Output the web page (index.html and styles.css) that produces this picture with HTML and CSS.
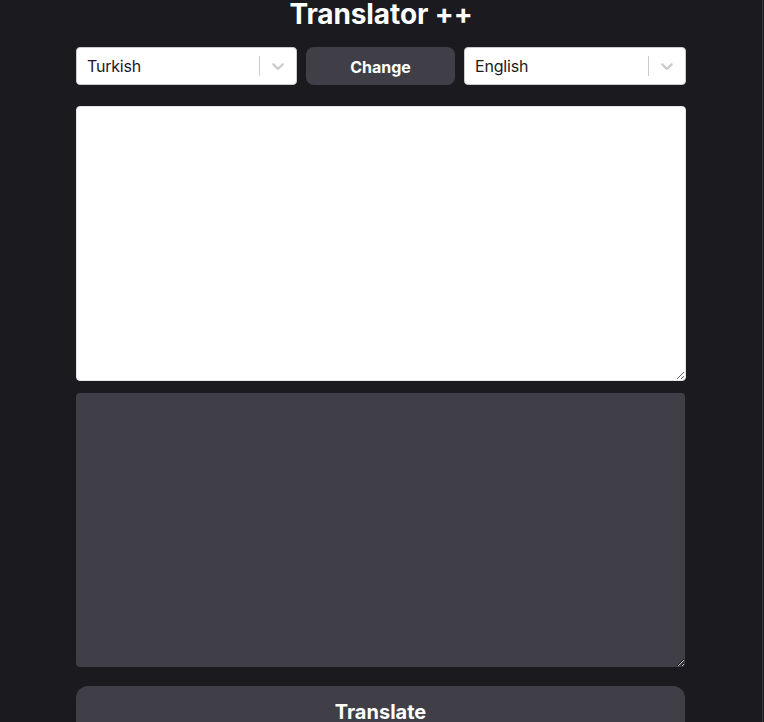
FILE: index.html
```html
<!DOCTYPE html>
<html lang="en">
<head>
<meta charset="utf-8">
<title>Translator ++</title>
<link rel="stylesheet" href="styles.css">
</head>
<body>
<div class="edge"></div>
<main class="app">
  <h1 class="title">Translator ++</h1>
  <div class="controls">
    <div class="select">
      <span class="select-value">Turkish</span>
      <span class="select-sep"></span>
      <span class="select-ind">
        <svg width="20" height="20" viewBox="0 0 20 20"><path d="M4.516 7.548c0.436-0.446 1.043-0.481 1.576 0l3.908 3.747 3.908-3.747c0.533-0.481 1.141-0.446 1.574 0 0.436 0.445 0.408 1.197 0 1.615-0.406 0.418-4.695 4.502-4.695 4.502-0.217 0.223-0.502 0.335-0.787 0.335s-0.57-0.112-0.789-0.335c0 0-4.287-4.084-4.695-4.502s-0.436-1.170 0-1.615z" fill="#cccccc"/></svg>
      </span>
    </div>
    <button class="btn change">Change</button>
    <div class="select">
      <span class="select-value">English</span>
      <span class="select-sep"></span>
      <span class="select-ind">
        <svg width="20" height="20" viewBox="0 0 20 20"><path d="M4.516 7.548c0.436-0.446 1.043-0.481 1.576 0l3.908 3.747 3.908-3.747c0.533-0.481 1.141-0.446 1.574 0 0.436 0.445 0.408 1.197 0 1.615-0.406 0.418-4.695 4.502-4.695 4.502-0.217 0.223-0.502 0.335-0.787 0.335s-0.57-0.112-0.789-0.335c0 0-4.287-4.084-4.695-4.502s-0.436-1.170 0-1.615z" fill="#cccccc"/></svg>
      </span>
    </div>
  </div>
  <textarea class="input"></textarea>
  <textarea class="output" readonly></textarea>
  <button class="btn translate">Translate</button>
</main>
</body>
</html>
```

FILE: styles.css
```css
html, body {
  margin: 0;
  padding: 0;
  background: #1b1a1f;
  height: 100%;
  overflow: hidden;
}
body {
  font-family: Inter, "Liberation Sans", Arial, sans-serif;
  color: #ffffff;
}
.edge {
  position: fixed;
  top: 0;
  right: 1px;
  width: 1px;
  height: 100%;
  background: #3a3a40;
}
.app {
  width: 610px;
  margin-left: 76px;
  display: flex;
  flex-direction: column;
}
.title {
  margin: -3px 0 0 0;
  height: 50px;
  font-size: 28px;
  line-height: 34px;
  font-weight: 700;
  text-align: center;
  color: #ffffff;
  letter-spacing: -0.1px;
}
.controls {
  display: grid;
  grid-template-columns: 221px 149px 1fr;
  gap: 9px;
  height: 38px;
}
.select {
  box-sizing: border-box;
  height: 38px;
  background: #ffffff;
  border: 1px solid #cccccc;
  border-radius: 4px;
  display: flex;
  align-items: center;
}
.select-value {
  flex: 1;
  padding-left: 10px;
  font-size: 16px;
  color: #1b1a1f;
  letter-spacing: -0.2px;
}
.select-sep {
  width: 1px;
  height: 20px;
  background: #cccccc;
}
.select-ind {
  display: flex;
  padding: 8px;
}
.btn {
  border: none;
  background: #403f48;
  color: #ffffff;
  font-family: Inter, "Liberation Sans", Arial, sans-serif;
  font-weight: 700;
  cursor: pointer;
}
.change {
  height: 38px;
  border-radius: 8px;
  font-size: 16px;
  padding: 0;
  line-height: 40px;
}
.input, .output {
  box-sizing: border-box;
  display: block;
  width: 610px;
  height: 275px;
  border-radius: 4px;
  resize: vertical;
  font-family: Inter, "Liberation Sans", Arial, sans-serif;
  font-size: 16px;
  padding: 8px;
  margin: 0;
  outline: none;
}
.input {
  margin-top: 21px;
  background: #ffffff;
  border: 1px solid #e5e5e5;
}
.output {
  margin-top: 12px;
  height: 274px;
  width: 609px;
  background: #403f48;
  border: none;
  color: #ffffff;
}
.translate {
  margin-top: 19px;
  width: 609px;
  height: 52px;
  border-radius: 12px;
  font-size: 20px;
  padding: 0;
  line-height: 52px;
}
```
